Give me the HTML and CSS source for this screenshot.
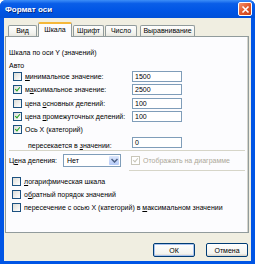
FILE: index.html
```html
<!DOCTYPE html>
<html lang="ru">
<head>
  <meta charset="UTF-8">
  <title>Формат оси</title>
  <link rel="stylesheet" href="styles.css">
</head>
<body>
  <div class="window">
    <!-- Title bar -->
    <div class="titlebar">
      <span class="title">Формат оси</span>
      <span class="close">
        <svg width="9" height="9" viewBox="0 0 9 9"><path d="M1.5 1.5 L7.5 7.5 M7.5 1.5 L1.5 7.5" stroke="#fff" stroke-width="1.6"/></svg>
      </span>
    </div>

    <div class="body">
      <!-- Tabs -->
      <div class="tabs">
        <div class="tab tab-vid">Вид</div>
        <div class="tab tab-scale active">Шкала</div>
        <div class="tab tab-font">Шрифт</div>
        <div class="tab tab-num">Число</div>
        <div class="tab tab-align">Выравнивание</div>
      </div>

      <!-- Tab content -->
      <div class="panel">
        <div class="heading">Шкала по оси Y (значений)</div>
        <div class="group-label">Авто</div>

        <div class="auto-rows">
          <div class="row">
            <label class="check"><span class="box"></span><span><u>м</u>инимальное значение:</span></label>
            <div class="field">1500</div>
          </div>
          <div class="row">
            <label class="check"><span class="box checked"></span><span>м<u>а</u>ксимальное значение:</span></label>
            <div class="field">2500</div>
          </div>
          <div class="row">
            <label class="check"><span class="box"></span><span>цена <u>о</u>сновных делений:</span></label>
            <div class="field">100</div>
          </div>
          <div class="row">
            <label class="check"><span class="box checked"></span><span>цена <u>п</u>ромежуточных делений:</span></label>
            <div class="field">100</div>
          </div>
          <div class="row">
            <label class="check"><span class="box checked"></span><span>Ось X (категорий)</span></label>
          </div>
          <div class="row row-cross">
            <span class="sub-label">пересекается в <u>з</u>начении:</span>
            <div class="field">0</div>
          </div>
        </div>

        <div class="sep"></div>

        <div class="step-row">
          <span class="step-label">Ц<u>е</u>на деления:</span>
          <div class="select">
            <span class="select-value">Нет</span>
            <span class="select-btn">
              <svg width="7" height="5" viewBox="0 0 7 5"><path d="M0.5 1 L3.5 4 L6.5 1" fill="none" stroke="#4d6185" stroke-width="1.5"/></svg>
            </span>
          </div>
          <label class="check disabled"><span class="box checked"></span><span>Отображать на диаграмме</span></label>
        </div>
        <div class="sep-right"></div>

        <div class="options">
          <label class="check"><span class="box"></span><span><u>л</u>огарифмическая шкала</span></label>
          <label class="check"><span class="box"></span><span>о<u>б</u>ратный порядок значений</span></label>
          <label class="check"><span class="box"></span><span>пересечение с осью X (категорий) в <u>м</u>аксимальном значении</span></label>
        </div>
      </div>

      <!-- Dialog buttons -->
      <div class="buttons">
        <button class="btn default">ОК</button>
        <button class="btn">Отмена</button>
      </div>
    </div>
  </div>
</body>
</html>
```

FILE: styles.css
```css
body {
  margin: 0;
  font-family: "Liberation Sans", Arial, sans-serif;
  font-size: 7px;
  color: #000;
}
u {
  text-decoration-thickness: 1px;
  text-underline-offset: 1px;
}
.window {
  width: 255px;
  height: 264px;
  box-sizing: border-box;
  display: flex;
  flex-direction: column;
  background: #0055e5;
  border-radius: 6px 6px 0 0;
  overflow: hidden;
}
.titlebar {
  height: 18px;
  flex: none;
  display: flex;
  align-items: center;
  justify-content: space-between;
  padding: 0 3px 0 5px;
  background: linear-gradient(#3d8ef8 0%, #0a5ee8 20%, #0055e5 60%, #0050d8 100%);
}
.title {
  color: #fff;
  font-weight: bold;
  font-size: 8px;
  text-shadow: 1px 1px 0 #0a2a7a;
}
.close {
  width: 14px;
  height: 14px;
  box-sizing: border-box;
  border: 1px solid #fff;
  border-radius: 2px;
  background: linear-gradient(135deg, #f2916e 0%, #e25a2c 50%, #c8401a 100%);
  display: flex;
  align-items: center;
  justify-content: center;
}
.body {
  flex: 1;
  margin: 0 4px 3px 4px;
  background: #f0eee1;
  display: flex;
  flex-direction: column;
  padding: 4px 2px 0 1px;
}
.tabs {
  display: flex;
  align-items: flex-end;
  height: 14px;
  padding-left: 3px;
  position: relative;
  z-index: 1;
}
.tab {
  height: 11px;
  box-sizing: border-box;
  border: 1px solid #919b9c;
  border-bottom: none;
  border-radius: 2px 2px 0 0;
  background: linear-gradient(#fefefe, #f3f3ee 70%, #e8e7df);
  text-align: center;
  line-height: 10px;
  margin-right: 1px;
  white-space: nowrap;
}
.tab.active {
  height: 15px;
  background: #fcfcfe;
  border-top: 2px solid #f5b83b;
  line-height: 11px;
  margin-bottom: -1px;
}
.tab-vid { width: 29px; }
.tab-scale { width: 34px; }
.tab-font { width: 31px; }
.tab-num { width: 32px; }
.tab-align { width: 55px; margin-left: 2px; }
.panel {
  height: 197px;
  flex: none;
  box-sizing: border-box;
  background: #fcfcfe;
  border: 1px solid #919b9c;
  box-shadow: inset -1px 0 0 #d5d4cc;
  padding: 11px 0 0 3px;
}
.heading {
  height: 13px;
  line-height: 10px;
}
.group-label {
  height: 9px;
  line-height: 10px;
}
.auto-rows {
  padding-left: 4px;
}
.row {
  display: flex;
  align-items: center;
  height: 13.3px;
}
.row .check {
  width: 119px;
  flex: none;
}
.row-cross .sub-label {
  width: 104px;
  padding-left: 15px;
  flex: none;
  padding-top: 4px;
}
.check {
  display: flex;
  align-items: center;
  gap: 3px;
  white-space: nowrap;
}
.box {
  width: 9px;
  height: 9px;
  box-sizing: border-box;
  border: 1px solid #1c5180;
  background: linear-gradient(135deg, #dcdcd7, #fff);
  flex: none;
  position: relative;
}
.box.checked::after {
  content: "";
  position: absolute;
  left: 2px;
  top: 0px;
  width: 2px;
  height: 4px;
  border: solid #21a121;
  border-width: 0 1.5px 1.5px 0;
  transform: rotate(40deg);
}
.field {
  width: 50px;
  height: 11px;
  box-sizing: border-box;
  border: 1px solid #7f9db9;
  background: #fff;
  padding-left: 2px;
  line-height: 9px;
  flex: none;
}
.row-cross .field {
  margin-top: -2px;
}
.sep {
  height: 0;
  border-top: 1px solid #d6d5c8;
  margin: 0 3px 0 0;
}
.step-row {
  display: flex;
  align-items: center;
  height: 19px;
}
.step-label {
  width: 54px;
  flex: none;
  white-space: nowrap;
}
.select {
  width: 58px;
  height: 13px;
  flex: none;
  box-sizing: border-box;
  border: 1px solid #7f9db9;
  background: #fff;
  display: flex;
  align-items: center;
  justify-content: space-between;
  padding: 1px;
}
.select-value {
  padding-left: 2px;
}
.select-btn {
  width: 10px;
  height: 9px;
  border-radius: 1px;
  background: linear-gradient(#dce7fc, #b6cbf8);
  display: flex;
  align-items: center;
  justify-content: center;
}
.step-row .check {
  margin-left: 10px;
}
.check.disabled {
  color: #aca899;
}
.check.disabled .box {
  border-color: #c9c7ba;
  background: #fff;
}
.check.disabled .box::after {
  border-color: #c9c7ba;
}
.sep-right {
  height: 0;
  border-top: 1px solid #d6d5c8;
  margin: 0 3px 0 120px;
}
.options {
  padding: 4px 0 0 3px;
  display: flex;
  flex-direction: column;
  align-items: flex-start;
}
.options .check {
  height: 13px;
}
.buttons {
  display: flex;
  justify-content: flex-end;
  gap: 11px;
  padding: 10px 1px 0 0;
}
.btn {
  width: 42px;
  height: 14px;
  box-sizing: border-box;
  border: 1px solid #003c74;
  border-radius: 2px;
  background: linear-gradient(#fff, #f3f3ef 80%, #d6d0c5);
  font-family: "Liberation Sans", Arial, sans-serif;
  font-size: 7px;
  padding: 0;
}
.btn.default {
  box-shadow: inset 0 0 0 1px #a8c2ee;
}
```
